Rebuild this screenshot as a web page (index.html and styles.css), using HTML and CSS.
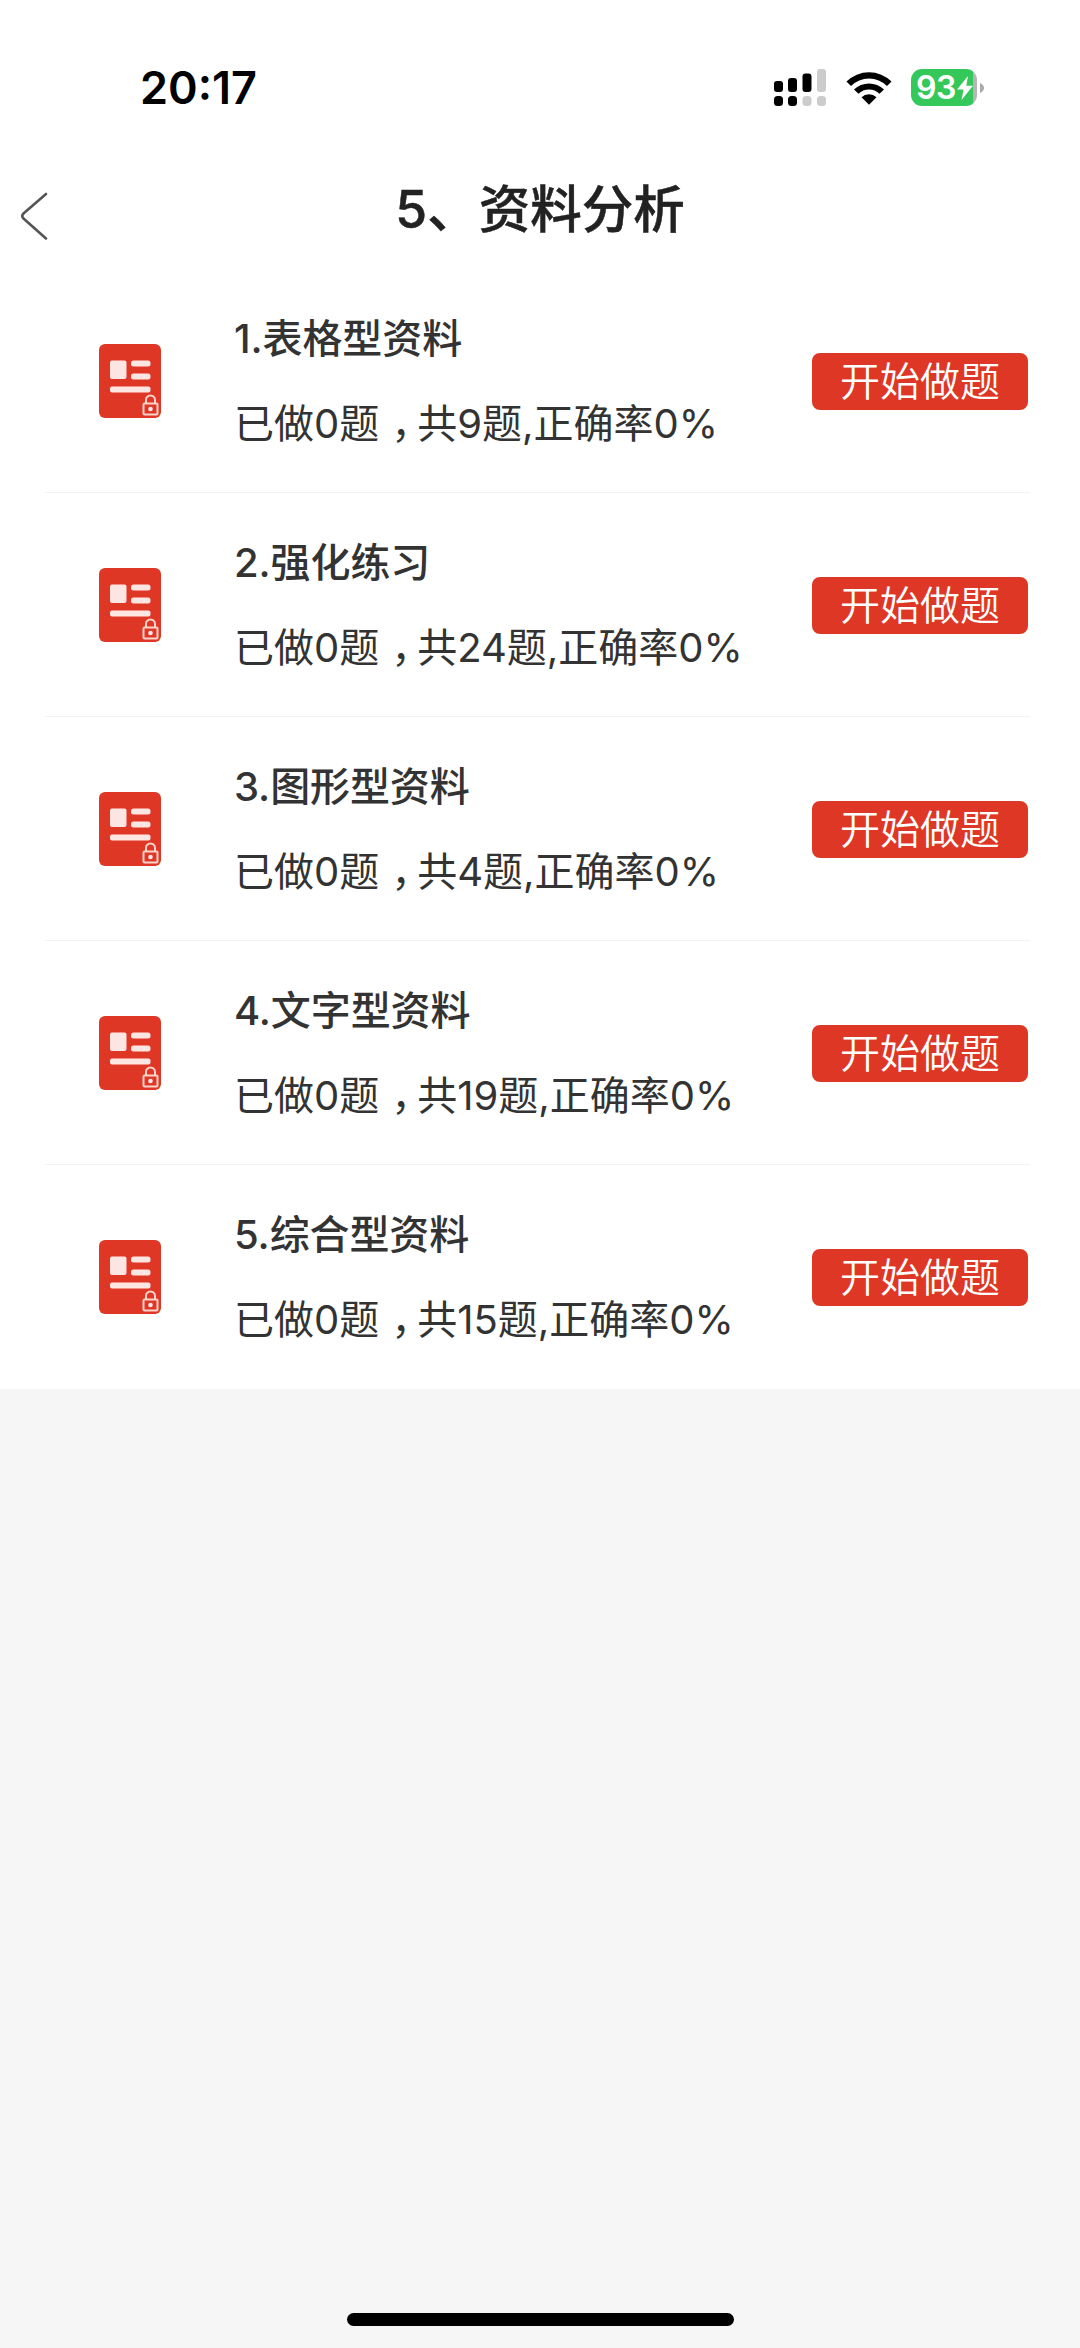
FILE: index.html
```
<!DOCTYPE html>
<html lang="zh-CN">
<head>
  <meta charset="UTF-8" />
  <meta name="viewport" content="width=device-width, initial-scale=1" />
  <title>资料分析</title>
  <link rel="stylesheet" href="styles.css">
</head>
<body>
  <svg class="sprite" aria-hidden="true">
    <symbol id="doc-lock" viewBox="0 0 62 74">
      <rect width="62" height="74" rx="6" fill="#de3726"/>
      <g fill="#fde6e2">
        <rect x="11" y="16.500" width="16.500" height="18.500" rx="2"/>
        <rect x="32" y="16.500" width="19.500" height="6" rx="2.5"/>
        <rect x="32" y="29.500" width="19.500" height="6" rx="2.5"/>
        <rect x="11" y="42.500" width="40.500" height="6" rx="2"/>
        <circle cx="51.5" cy="65" r="2.3"/>
      </g>
      <g fill="none" stroke="#fbd3cb" stroke-width="2">
        <path d="M47 59v-3a4.5 4.5 0 0 1 9 0v3"/>
        <rect x="44.500" y="59.500" width="14" height="11" rx="1"/>
      </g>
    </symbol>
  </svg>

  <div class="status-bar">
    <span class="time">20:17</span>
    <div class="status-icons">
      <svg class="signal" width="54" height="38" viewBox="0 0 54 38">
        <rect x="1" y="12" width="9" height="11" rx="3"/>
        <rect x="15" y="9" width="9" height="14" rx="3"/>
        <rect x="29.500" y="4.500" width="9" height="18.500" rx="3"/>
        <rect class="off" x="44" y="0" width="9" height="23" rx="3"/>
        <rect x="1" y="27" width="9" height="10" rx="3.500"/>
        <rect x="15" y="27" width="9" height="10" rx="3.500"/>
        <rect class="off" x="29.500" y="27" width="9" height="10" rx="3.500"/>
        <rect class="off" x="44" y="27" width="9" height="10" rx="3.500"/>
      </svg>
      <svg class="wifi" width="46" height="34" viewBox="0 0 46 34">
        <path d="M0.500 10.500A32 32 0 0 1 45.500 10.500L41 15A25.500 25.500 0 0 0 5 15Z"/>
        <path d="M8 18.500A21.500 21.500 0 0 1 38 18.500L33.500 22.800A15 15 0 0 0 12.500 22.800Z"/>
        <path d="M15.500 26.200A10.800 10.800 0 0 1 30.500 26.200L23 33.800Z"/>
      </svg>
      <div class="battery">
        <span class="level">93</span>
        <svg class="bolt" width="16" height="24" viewBox="0 0 16 24"><path d="M11 0L0 13.500h6.500L4.500 24L16 9.800H9.300z" fill="#fff"/></svg>
        <svg class="nub" width="4" height="10" viewBox="0 0 4 10"><path d="M0 0q4 2 4 5t-4 5z" fill="#aaa"/></svg>
      </div>
    </div>
  </div>

  <header class="nav-bar">
    <a class="back" href="#" aria-label="返回">
      <svg width="28" height="50" viewBox="0 0 28 50"><path d="M26 2L3.500 21.500Q1 24 3.500 26.500L26 46.500" fill="none" stroke="#555" stroke-width="2.600" stroke-linecap="round"/></svg>
    </a>
    <h1>5、资料分析</h1>
  </header>

  <main class="list">
    <div class="item">
      <svg class="item-icon"><use href="#doc-lock"/></svg>
      <div class="item-info">
        <h2>1.表格型资料</h2>
        <p>已做0题<span class="comma">，</span>共9题,正确率0%</p>
      </div>
      <button class="start">开始做题</button>
    </div>
    <div class="item">
      <svg class="item-icon"><use href="#doc-lock"/></svg>
      <div class="item-info">
        <h2>2.强化练习</h2>
        <p>已做0题<span class="comma">，</span>共24题,正确率0%</p>
      </div>
      <button class="start">开始做题</button>
    </div>
    <div class="item">
      <svg class="item-icon"><use href="#doc-lock"/></svg>
      <div class="item-info">
        <h2>3.图形型资料</h2>
        <p>已做0题<span class="comma">，</span>共4题,正确率0%</p>
      </div>
      <button class="start">开始做题</button>
    </div>
    <div class="item">
      <svg class="item-icon"><use href="#doc-lock"/></svg>
      <div class="item-info">
        <h2>4.文字型资料</h2>
        <p>已做0题<span class="comma">，</span>共19题,正确率0%</p>
      </div>
      <button class="start">开始做题</button>
    </div>
    <div class="item">
      <svg class="item-icon"><use href="#doc-lock"/></svg>
      <div class="item-info">
        <h2>5.综合型资料</h2>
        <p>已做0题<span class="comma">，</span>共15题,正确率0%</p>
      </div>
      <button class="start">开始做题</button>
    </div>
  </main>

  <div class="home-indicator"></div>
</body>
</html>
```
FILE: styles.css
```
:root {
  --color-bg: #f6f6f6;
  --color-text: #333;
  --color-primary: #de3726;
  --font-family: Inter, "Noto Sans CJK SC", sans-serif;
}

* { box-sizing: border-box; }

body {
  display: flex;
  flex-direction: column;
  height: 2348px;
  margin: 0;
  background-color: var(--color-bg);
  color: var(--color-text);
  font-family: var(--font-family);
}

h1, h2, p {
  margin: 0;
}

.sprite {
  position: absolute;
  width: 0;
  height: 0;
}

.status-bar {
  display: flex;
  justify-content: space-between;
  align-items: center;
  height: 175px;
  padding: 0 103px 0 140px;
  background-color: #fff;
}

.time {
  color: #000;
  font-size: 45px;
  font-weight: 600;
}

.status-icons {
  display: flex;
  align-items: center;
  gap: 19px;
}

.signal .off {
  fill: #ccc;
}

.battery {
  position: relative;
  display: flex;
  align-items: center;
  width: 66px;
  height: 37px;
  padding-left: 5px;
  border-radius: 11px;
  background: linear-gradient(to right, #34c759 62px, #b5b5b5 62px);
}

.level {
  color: #fff;
  font-size: 32px;
  font-weight: 600;
  letter-spacing: -0.5px;
}

.bolt {
  margin-left: 1px;
}

.nub {
  position: absolute;
  right: -7px;
  top: 14px;
}

.nav-bar {
  position: relative;
  display: flex;
  justify-content: center;
  align-items: center;
  height: 94px;
  padding-bottom: 26px;
  background-color: #fff;
}

.back {
  position: absolute;
  left: 20px;
  top: 17px;
}

h1 {
  color: #222;
  font-size: 51.5px;
  font-weight: 500;
  line-height: 68px;
  -webkit-text-stroke: 0.5px #222;
}

.list {
  background-color: #fff;
}

.item {
  position: relative;
  display: flex;
  align-items: center;
  height: 224px;
  padding: 0 52px 0 99px;
}

.item + .item::before {
  content: "";
  position: absolute;
  top: -1px;
  left: 45px;
  right: 50px;
  height: 1px;
  background-color: #f3f3f3;
}

.item-icon {
  width: 62px;
  height: 74px;
}

.item-info {
  flex: 1;
  margin-left: 73px;
  padding-top: 1px;
}

.item-info h2 {
  font-size: 40px;
  font-weight: 500;
  line-height: 60px;
  letter-spacing: -0.1px;
}

.item-info p {
  margin-top: 25px;
  font-size: 40px;
  font-weight: 400;
  line-height: 60px;
}

/* half-width comma, centred in its cell */
.comma {
  padding: 0 6px 0 12px;
  font-feature-settings: "halt";
}

.start {
  width: 216px;
  height: 57px;
  padding: 0;
  border: none;
  border-radius: 8px;
  background-color: var(--color-primary);
  color: #fff;
  font-family: var(--font-family);
  font-size: 40px;
  font-weight: 350;
  line-height: 57px;
}

.home-indicator {
  width: 387px;
  height: 13px;
  margin: auto auto 22px;
  border-radius: 7px;
  background-color: #000;
}
```
